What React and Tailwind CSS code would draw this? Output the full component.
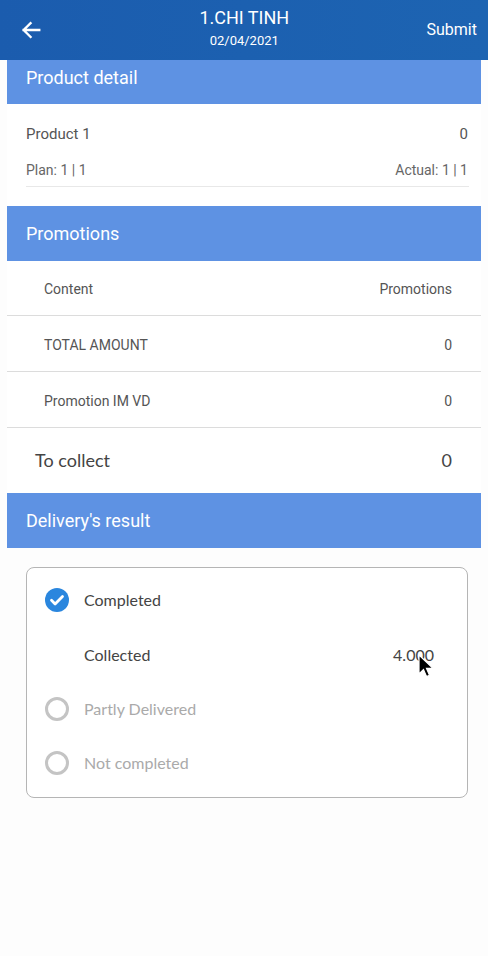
import React from 'react';

const roboto = { fontFamily: 'Roboto, "Liberation Sans", sans-serif' };
const lato = { fontFamily: 'Lato, "Liberation Sans", sans-serif' };

const SectionHeader = ({ title }) => (
    <div className="h-[55px] bg-[#5e92e3] flex items-center px-[19px] text-white text-[18px]" style={roboto}>
        {title}
    </div>
);

const Radio = ({ checked }) => (
    checked ? (
        <svg width="24" height="24" viewBox="0 0 24 24">
            <circle cx="12" cy="12" r="12" fill="#2a86de" />
            <path d="M6.5 12.3l3.6 3.6 7.4-7.4" fill="none" stroke="white" strokeWidth="2.8" strokeLinecap="round" strokeLinejoin="round" />
        </svg>
    ) : (
        <svg width="24" height="24" viewBox="0 0 24 24">
            <circle cx="12" cy="12" r="10.5" fill="none" stroke="#c4c4c4" strokeWidth="3" />
        </svg>
    )
);

const App = () => {
    const promos = [
        { name: 'TOTAL AMOUNT', value: '0' },
        { name: 'Promotion IM VD', value: '0' }
    ];

    return (
        <div className="w-[488px] h-[956px] bg-[#fdfdfd] overflow-hidden">
            {/* top bar */}
            <div className="h-[60px] bg-gradient-to-r from-[#1b5cae] to-[#1d64b2] flex items-center justify-between px-[20px] text-white" style={roboto}>
                <svg width="22" height="22" viewBox="0 0 24 24" fill="none" stroke="white" strokeWidth="2.6" strokeLinecap="square">
                    <path d="M21 12H4M11.5 4.5L4 12l7.5 7.5" />
                </svg>
                <div className="flex flex-col items-center ml-[20px] -mt-[4px]">
                    <div className="text-[18px] leading-[22px]">1.CHI TINH</div>
                    <div className="text-[13px] leading-[16px] mt-[4px]">02/04/2021</div>
                </div>
                <div className="text-[16px] -mr-[9px] -mt-[1px]">Submit</div>
            </div>

            <div className="mx-[7px]">
                {/* partly scrolled under the top bar */}
                <div className="h-[44px] bg-[#5e92e3] flex items-start pt-[7px] px-[19px] text-white text-[18px] leading-[22px]" style={roboto}>
                    Product detail
                </div>

                {/* product */}
                <div className="bg-white pl-[19px] pr-[12px] pt-[20px] pb-[19px]" style={roboto}>
                    <div className="flex justify-between text-[15px] text-[#555] leading-[20px] pr-[1px]">
                        <span>Product 1</span>
                        <span>0</span>
                    </div>
                    <div className="flex justify-between text-[14px] text-[#666] leading-[16px] mt-[18px] pb-[8px] border-b border-[#e8e8e8]">
                        <span>Plan: 1 | 1</span>
                        <span className="pr-[1px]">Actual: 1 | 1</span>
                    </div>
                </div>

                <SectionHeader title="Promotions" />

                {/* promotions table */}
                <div className="bg-white" style={roboto}>
                    <div className="h-[55px] flex items-center justify-between pl-[37px] pr-[29px] pt-[3px] text-[14px] text-[#555] border-b border-[#dcdcdc]">
                        <span>Content</span>
                        <span>Promotions</span>
                    </div>
                    {promos.map((p) => (
                        <div key={p.name} className="h-[56px] flex items-center justify-between pl-[37px] pr-[29px] pt-[3px] text-[14px] text-[#555] border-b border-[#dcdcdc]">
                            <span>{p.name}</span>
                            <span>{p.value}</span>
                        </div>
                    ))}
                    <div className="h-[65px] flex items-center justify-between pl-[28px] pr-[29px] text-[18px] text-[#444]" style={lato}>
                        <span>To collect</span>
                        <span>0</span>
                    </div>
                </div>

                <SectionHeader title="Delivery's result" />
            </div>

            {/* delivery result card */}
            <div className="mx-[26px] w-[442px] mt-[19px] border border-[#b5b5b5] rounded-[8px] bg-white px-[18px] pt-[19px] pb-[21px] relative" style={lato}>
                <div className="flex items-center h-[26px] gap-[15px]">
                    <Radio checked />
                    <span className="text-[16px] text-[#444]">Completed</span>
                </div>
                <div className="flex items-center justify-between h-[26px] mt-[29px] pl-[39px] pr-[15px] text-[16px] text-[#444]">
                    <span>Collected</span>
                    <span>4.000</span>
                </div>
                <div className="flex items-center h-[26px] gap-[15px] mt-[28px]">
                    <Radio />
                    <span className="text-[16px] text-[#aaa]">Partly Delivered</span>
                </div>
                <div className="flex items-center h-[26px] gap-[15px] mt-[28px]">
                    <Radio />
                    <span className="text-[16px] text-[#aaa]">Not completed</span>
                </div>

                {/* mouse pointer */}
                <svg className="absolute left-[391px] top-[86px]" width="16" height="24" viewBox="0 0 16 24">
                    <path d="M1 1v19l4.5-4.5 3 7 3-1.3-3-6.8H15z" fill="black" stroke="white" strokeWidth="1.2" />
                </svg>
            </div>
        </div>
    );
};

export default App;
